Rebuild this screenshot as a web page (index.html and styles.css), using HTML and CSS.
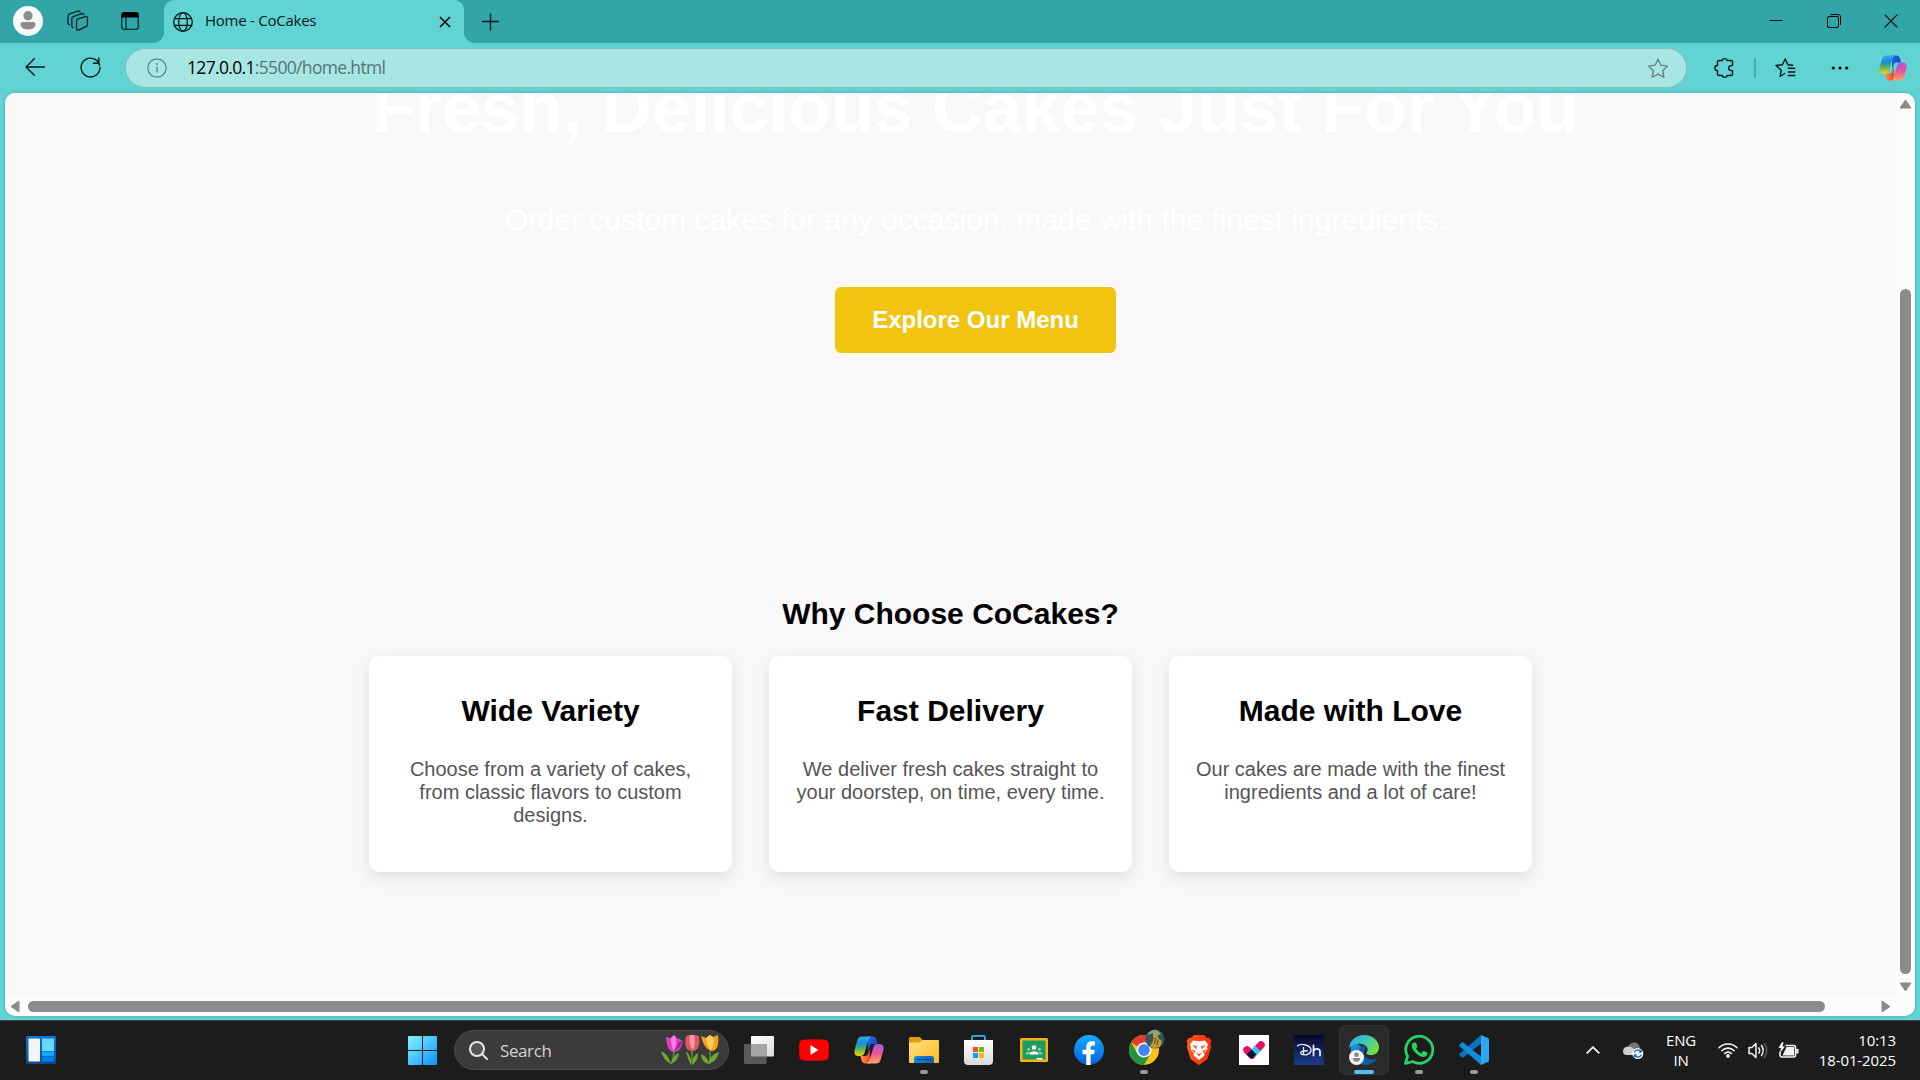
FILE: index.html
```html
<!DOCTYPE html>
<html lang="en">
<head>
<meta charset="utf-8">
<title>Home - CoCakes</title>
<link rel="stylesheet" href="styles.css">
</head>
<body>
<svg class="defs" width="0" height="0">
  <defs>
    <linearGradient id="cpBlue" x1="0" y1="0" x2="0" y2="1"><stop offset="0" stop-color="#27b4f2"/><stop offset=".35" stop-color="#1b8ae0"/><stop offset=".65" stop-color="#57b45a"/><stop offset="1" stop-color="#ffd500"/></linearGradient>
    <linearGradient id="cpDark" x1="0" y1="0" x2="1" y2="1"><stop offset="0" stop-color="#1c6fe0"/><stop offset="1" stop-color="#1637b8"/></linearGradient>
    <linearGradient id="cpPink" x1="0" y1="0" x2="0" y2="1"><stop offset="0" stop-color="#a557e8"/><stop offset=".5" stop-color="#ee5396"/><stop offset="1" stop-color="#ffa95c"/></linearGradient>
    <linearGradient id="cpRed" x1="0" y1="0" x2="1" y2="0"><stop offset="0" stop-color="#ff9a3d"/><stop offset="1" stop-color="#ef4030"/></linearGradient>
    <linearGradient id="win" x1="0" y1="0" x2="1" y2="1"><stop offset="0" stop-color="#85f4ff"/><stop offset="1" stop-color="#0a93ff"/></linearGradient>
    <linearGradient id="folder" x1="0" y1="0" x2="1" y2="1"><stop offset="0" stop-color="#ffe083"/><stop offset="1" stop-color="#fcbc22"/></linearGradient>
    <linearGradient id="tray" x1="0" y1="0" x2="1" y2="0"><stop offset="0" stop-color="#1389dd"/><stop offset="1" stop-color="#0c62b4"/></linearGradient>
    <linearGradient id="bag" x1="0" y1="0" x2="0" y2="1"><stop offset="0" stop-color="#fff"/><stop offset="1" stop-color="#d8d8d8"/></linearGradient>
    <linearGradient id="fb" x1="0" y1="0" x2="0" y2="1"><stop offset="0" stop-color="#18acfe"/><stop offset="1" stop-color="#0163e0"/></linearGradient>
    <linearGradient id="brave" x1="0" y1="0" x2="1" y2="0"><stop offset="0" stop-color="#ff5a1a"/><stop offset="1" stop-color="#ff2a08"/></linearGradient>
    <linearGradient id="dh" x1="0" y1="0" x2="0" y2="1"><stop offset="0" stop-color="#06082a"/><stop offset="1" stop-color="#1d3b8b"/></linearGradient>
    <linearGradient id="edgeTop" x1="0" y1="0" x2="1" y2=".5"><stop offset="0" stop-color="#31a7e0"/><stop offset=".5" stop-color="#36c6c6"/><stop offset="1" stop-color="#6ee04a"/></linearGradient>
    <linearGradient id="edgeBot" x1="0" y1="0" x2="1" y2="1"><stop offset="0" stop-color="#1b9de2"/><stop offset="1" stop-color="#0a4a9a"/></linearGradient>
    <linearGradient id="wid" x1="0" y1="0" x2="0" y2="1"><stop offset="0" stop-color="#0a78d4"/><stop offset="1" stop-color="#0b4a94"/></linearGradient>
    <linearGradient id="view" x1="0" y1="0" x2="1" y2="1"><stop offset="0" stop-color="#fff"/><stop offset="1" stop-color="#dcdcdc"/></linearGradient>
    <symbol id="copilot" viewBox="0 0 30 30">
      <path fill="url(#cpDark)" d="M14 1.500h5c2 0 2.800 1.200 3.400 3.200l1.200 4.300h-4.800c-1.600 0-2.500.8-3 2.400l-1.800 5z"/>
      <path fill="url(#cpRed)" d="M16 28.500h-5c-2 0-2.800-1.200-3.400-3.200L6.400 21h4.800c1.600 0 2.500-.8 3-2.400l1.800-5z"/>
      <path fill="url(#cpBlue)" d="M8.200 1.500h9.600c-2 .3-2.900 1.800-3.500 3.900l-3.700 12.200c-.7 2.300-1.800 3.400-4.200 3.400H4.500C.8 21-.2 18.300.6 15L3.200 5.700C4 2.900 5.500 1.500 8.200 1.500z"/>
      <path fill="url(#cpPink)" d="M21.800 28.500h-9.600c2-.3 2.900-1.800 3.500-3.900l3.700-12.200c.7-2.300 1.800-3.400 4.200-3.400h1.900c3.700 0 4.700 2.700 3.900 6l-2.600 9.300c-.8 2.800-2.300 4.200-5 4.200z"/>
    </symbol>
  </defs>
</svg>

<div class="window">
  <header class="titlebar">
    <div class="titlebar-tools">
      <svg class="avatar" width="30" height="30" viewBox="0 0 30 30"><circle cx="15" cy="15" r="15" fill="#fafafa"/><circle cx="15" cy="9.800" r="4.700" fill="#8c8c8c"/><path d="M9.500 16h11a2 2 0 0 1 2 2c0 3.400-3 5.500-7.500 5.500S7.500 21.400 7.500 18a2 2 0 0 1 2-2z" fill="#8c8c8c"/></svg>
      <svg class="workspaces" width="22" height="22" viewBox="0 0 22 22" fill="none" stroke="#0b2324" stroke-width="1.300" stroke-linejoin="round" stroke-linecap="round"><path d="M10.500 9.200l7.800-2.600c1.200-.4 2.200.2 2.200 1.400v6.800c0 .9-.5 1.600-1.300 1.900l-7.300 3.100c-1.300.5-2.400 0-2.400-1.400v-7c0-1.100.2-1.900 1-2.200z"/><path d="M6 17.500c-.8 0-1.200-.6-1.200-1.500V9.300c0-1.300.4-2.200 1.500-2.600l8.500-3c.9-.3 1.800 0 2.100.7"/><path d="M2.300 14.500c-.9 0-1.300-.6-1.300-1.500V6.300C1 5 1.400 4.200 2.500 3.800l8.500-2.700c.8-.3 1.700 0 2 .7"/></svg>
      <svg class="tabs-icon" width="18" height="18" viewBox="0 0 18 18"><rect x=".7" y=".7" width="16.600" height="16.600" rx="2.600" fill="none" stroke="#062a2b" stroke-width="1.300"/><path d="M.3 5.500V3A2.700 2.700 0 0 1 3 .2h12A2.700 2.700 0 0 1 17.700 3v2.500z" fill="#000"/><path d="M5 5v12.500" stroke="#062a2b" stroke-width="1.200"/></svg>
    </div>
    <div class="tab">
      <svg width="20" height="20" viewBox="0 0 20 20" fill="none" stroke="#06191a" stroke-width="1.300"><circle cx="10" cy="10" r="9.300"/><ellipse cx="10" cy="10" rx="4.300" ry="9.300"/><path d="M1.400 6.700h17.200M1.400 13.300h17.200"/></svg>
      <span class="tab-title">Home - CoCakes</span>
      <svg class="tab-close" width="12" height="12" viewBox="0 0 12 12" stroke="#000" stroke-width="1.500"><path d="M1 1l10 10M11 1L1 11"/></svg>
    </div>
    <svg class="new-tab" width="18" height="18" viewBox="0 0 18 18" stroke="#04191a" stroke-width="1.300"><path d="M8.500.5v17M0 8.500h17"/></svg>
    <div class="window-controls">
      <svg width="14" height="14" viewBox="0 0 14 14" stroke="#000" stroke-width="1"><path d="M.5 6.500h13"/></svg>
      <svg width="14" height="14" viewBox="0 0 14 14" fill="none" stroke="#000" stroke-width="1"><rect x=".5" y="2.500" width="11" height="11" rx="1.500"/><path d="M3.500.5h7.500a2.500 2.500 0 0 1 2.500 2.500v8"/></svg>
      <svg width="14" height="14" viewBox="0 0 14 14" stroke="#000" stroke-width="1.100"><path d="M.7.700l12.600 12.600M13.300.700L.7 13.300"/></svg>
    </div>
  </header>

  <div class="toolbar">
    <svg class="back" width="20" height="18" viewBox="0 0 20 18" fill="none" stroke="#06191a" stroke-width="1.400" stroke-linecap="round" stroke-linejoin="round"><path d="M9.300.8L1 9l8.300 8.200M1 9h18.500"/></svg>
    <svg class="reload" width="21" height="21" viewBox="0 0 21 21" fill="none" stroke="#06191a" stroke-width="1.400" stroke-linecap="round"><path d="M19.600 8.200A9.400 9.400 0 1 0 19.900 10.500M13.500 6.300h5.300V1"/></svg>
    <div class="address">
      <svg width="20" height="20" viewBox="0 0 20 20"><circle cx="10" cy="10" r="9.200" fill="none" stroke="#5b8384" stroke-width="1.200"/><path d="M10 8.800v5.800" stroke="#5b7b7c" stroke-width="1.300"/><circle cx="10" cy="6" r=".95" fill="#5b7b7c"/></svg>
      <span class="url"><b>127.0.0.1</b>:5500/home.html</span>
      <svg class="star" width="22" height="21" viewBox="0 0 22 21" fill="none" stroke="#6a7b7c" stroke-width="1.300" stroke-linejoin="round"><path d="M11 1.200l2.900 6 6.600.9-4.800 4.600 1.200 6.600-5.900-3.200-5.900 3.200 1.200-6.600L1.500 8.100l6.600-.9z"/></svg>
    </div>
    <div class="toolbar-actions">
      <svg width="21" height="22" viewBox="0 0 21 22" fill="none" stroke="#06191a" stroke-width="1.400" stroke-linejoin="round"><path d="M5 3.500h3.200a2.600 2.600 0 0 1 5 0H17a1.500 1.500 0 0 1 1.500 1.500v3.600h-1.300a2.500 2.500 0 0 0 0 5h1.300V17a1.500 1.500 0 0 1-1.500 1.500h-3.800a2.600 2.600 0 0 1-5 0H5A1.500 1.500 0 0 1 3.500 17v-3.300a2.600 2.600 0 0 1 0-5.200V5A1.500 1.500 0 0 1 5 3.500z"/></svg>
      <span class="divider"></span>
      <svg width="21" height="20" viewBox="0 0 21 20" fill="none" stroke="#06191a" stroke-width="1.400" stroke-linejoin="round" stroke-linecap="round"><path d="M9.800 15.500L5 18.500l1.300-6.300L1 7.500l6.400-.8L10.200 1l2.700 5.700 4.600.6M13.300 10.200h6.500M13.300 14h6.500M13.300 17.500h6.500"/></svg>
      <svg class="more" width="18" height="4" viewBox="0 0 18 4"><circle cx="2.300" cy="2" r="1.600"/><circle cx="9" cy="2" r="1.600"/><circle cx="15.700" cy="2" r="1.600"/></svg>
      <svg class="assistant" width="28" height="28"><use href="#copilot"/></svg>
    </div>
  </div>

  <div class="viewport">
    <main class="page">
      <section class="hero">
        <h1>Fresh, Delicious Cakes Just For You</h1>
        <p>Order custom cakes for any occasion, made with the finest ingredients.</p>
        <a class="cta">Explore Our Menu</a>
      </section>
      <section class="features">
        <h2>Why Choose CoCakes?</h2>
        <div class="cards">
          <article class="card"><h3>Wide Variety</h3><p>Choose from a variety of cakes,<br>from classic flavors to custom<br>designs.</p></article>
          <article class="card"><h3>Fast Delivery</h3><p>We deliver fresh cakes straight to<br>your doorstep, on time, every time.</p></article>
          <article class="card"><h3>Made with Love</h3><p>Our cakes are made with the finest<br>ingredients and a lot of care!</p></article>
        </div>
      </section>
    </main>
    <div class="vscroll">
      <svg width="13" height="10" viewBox="0 0 13 10"><path d="M6.500 1L12 9H1z"/></svg>
      <span class="vthumb"></span>
      <svg width="13" height="10" viewBox="0 0 13 10"><path d="M6.500 9L12 1H1z"/></svg>
    </div>
    <div class="hscroll">
      <svg width="10" height="13" viewBox="0 0 10 13"><path d="M1 6.500L9 1v11z"/></svg>
      <span class="hthumb"></span>
      <svg width="10" height="13" viewBox="0 0 10 13"><path d="M9 6.500L1 1v11z"/></svg>
    </div>
  </div>
</div>

<footer class="taskbar">
  <svg class="widgets" width="30" height="28" viewBox="0 0 30 28"><rect width="30" height="28" rx="1.500" fill="url(#wid)"/><rect x="2.500" y="2.500" width="11.500" height="23" rx="1" fill="#f4f4f4"/><path d="M16 2.500h12V15H16z" fill="#67d9ff"/><path d="M16 15.500h12V20H16z" fill="#1ba5f8"/><path d="M16 20.500h12v5H16z" fill="#0482ea"/></svg>
  <svg class="start" width="29" height="29" viewBox="0 0 29 29"><path fill="url(#win)" d="M1 0h13v14H0V1a1 1 0 0 1 1-1zM15 0h13a1 1 0 0 1 1 1v13H15zM0 15h14v14H1a1 1 0 0 1-1-1zM15 15h14v13a1 1 0 0 1-1 1H15z"/></svg>
  <div class="search">
    <svg width="19" height="19" viewBox="0 0 19 19" fill="#555" stroke="#e4e8ea" stroke-width="2"><circle cx="8" cy="8" r="7"/><path d="M13 13l5 5" stroke-linecap="round"/></svg>
    <span>Search</span>
    <svg class="tulips" width="60" height="32" viewBox="0 0 60 32">
      <g stroke="#4f8f28" stroke-width="1.600" fill="none"><path d="M14 17q0 7-3 13M32 17v13M50 17q1 7-1 13"/></g>
      <g fill="#6ea833"><path d="M11 30Q8 20 1 17q2 9 10 13zM11 30q1-8 8-11-1 8-8 11zM31 31q-4-8-5-14 6 6 5 14zM32 31q0-9 6-12 0 8-6 12zM49 30q-8-2-8-10 7 3 8 10zM49 30q0-9 10-12-2 9-10 12z"/></g>
      <path d="M6 3l5 1 3-3 3 3 6 3q-2 11-9 11T6 3z" fill="#d945b9"/><path d="M11 4q0 9 3 13 3-6 2-13l-2-3z" fill="#f47fdb"/><path d="M14 17q6-3 9-10l-4 1z" fill="#a91d91"/>
      <path d="M26 2l4-1h5l4 1q2 15-7 15T26 2z" fill="#dc5965"/><path d="M30 1h4q2 9-1 15-5-6-3-15z" fill="#fb9ca0"/>
      <path d="M41 2l5 2 4-3 3 2 5-2q2 16-7 16-7-2-10-15z" fill="#f0a322"/><path d="M46 4l4-3 3 2q2 8-2 13-4-5-5-12z" fill="#ffd15b"/>
    </svg>
  </div>
  <nav class="apps">
    <span class="app"><svg width="30" height="28" viewBox="0 0 30 28"><rect x="7" width="23" height="20.500" rx="1" fill="url(#view)"/><path d="M1 8h21.500v19a1 1 0 0 1-1 1H1a1 1 0 0 1-1-1V9a1 1 0 0 1 1-1z" fill="#595959"/><path d="M7 8h15.500v12.500H7z" fill="#a5a5a5"/></svg></span>
    <span class="app"><svg width="30" height="22" viewBox="0 0 30 22"><path d="M4 .7Q15-.4 26 .7q3 .3 3.500 3.300.9 7 0 14-.5 3-3.500 3.300-11 1.100-22 0Q1 21 .5 18q-.9-7 0-14Q1 1 4 .7z" fill="#f00"/><path d="M11.500 6v10l8-5z" fill="#fff"/></svg></span>
    <span class="app"><svg width="30" height="30"><use href="#copilot"/></svg></span>
    <span class="app running"><svg width="30" height="28" viewBox="0 0 30 28"><path d="M1.500 1h8.300c1 0 1.400.3 2 1l2 2.500H29V14H0V2.500A1.500 1.500 0 0 1 1.500 1z" fill="#e0a008"/><path d="M0 6.500h9.500c1 0 1.600-.3 2.200-.9l1.600-1.600H29a1 1 0 0 1 1 1v21a1 1 0 0 1-1 1H1a1 1 0 0 1-1-1z" fill="url(#folder)"/><path d="M5 27v-4.500A2.500 2.500 0 0 1 7.500 20h15a2.500 2.500 0 0 1 2.500 2.500V27z" fill="url(#tray)"/><path d="M8 23.500h14" stroke="#0a4685" stroke-width="1.200"/></svg></span>
    <span class="app"><svg width="29" height="30" viewBox="0 0 29 30"><path d="M8 6V2.300A1.500 1.500 0 0 1 9.500.9h10A1.500 1.500 0 0 1 21 2.300V6" fill="none" stroke="#2eb5ec" stroke-width="1.800"/><path d="M0 5h29v21a4 4 0 0 1-4 4H4a4 4 0 0 1-4-4z" fill="url(#bag)"/><path d="M9 12h5v5H9z" fill="#f25022"/><path d="M15 12h5v5h-5z" fill="#7fba00"/><path d="M9 18h5v5H9z" fill="#00a4ef"/><path d="M15 18h5v5h-5z" fill="#ffb900"/></svg></span>
    <span class="app"><svg width="28" height="24" viewBox="0 0 28 24"><rect width="28" height="24" rx="1.500" fill="#f4b412"/><path d="M2.500 2.500h23v19h-23z" fill="#1c9d5f"/><g fill="#fff"><circle cx="14" cy="9.500" r="2.300"/><path d="M9.300 16.500c0-4.400 9.400-4.400 9.400 0zM16.500 20h6v1.500h-6z"/></g><g fill="#8bd0a9"><circle cx="8.700" cy="11.300" r="1.500"/><circle cx="19.300" cy="11.300" r="1.500"/><path d="M5.500 16.500c0-2.500 2-3.200 3.800-2.600l-1 2.600zM22.500 16.500c0-2.500-2-3.200-3.800-2.600l1 2.600z"/></g></svg></span>
    <span class="app"><svg width="30" height="30" viewBox="0 0 30 30"><circle cx="15" cy="15" r="15" fill="url(#fb)"/><path d="M12.300 30V19.200H8.500v-4.400h3.800v-2.500c0-4 2-6 5.800-6 1.200 0 2 .1 2.800.3v4h-2c-1.800 0-2.300.8-2.300 2.300v1.900h4.200l-.8 4.400h-3.400V30z" fill="#fff"/></svg></span>
    <span class="app running"><svg class="chrome" width="36" height="36" viewBox="0 -6 36 36"><circle cx="15" cy="15" r="15" fill="#fbc116"/><path d="M15 15L2 7.500A15 15 0 0 1 28 7.500H15z" fill="#e33b2e"/><path d="M2 7.500A15 15 0 0 0 15 30l6.500-11.300L8.500 18.700z" fill="#229342"/><circle cx="15" cy="15" r="7.500" fill="#fff"/><circle cx="15" cy="15" r="5.900" fill="#4285f4"/><circle cx="26" cy="4" r="9.500" fill="#315661"/><path d="M18 0q4-6 10-5l4 4-4 2-3-3z" fill="#78a795"/><path d="M24-3l4 1 1 5 4 3-2 6-7 1-3-2 3-5z" fill="#c29a35"/><path d="M24 3l3 1-2 5M29 5l-1 5" stroke="#5e4a1b" fill="none"/></svg></span>
    <span class="app"><svg width="26" height="30" viewBox="0 0 26 30"><path d="M8 0h10l3 3 2-.3L25.500 6l-1 3 .7 3-3.700 12L13 30l-8.500-6L.8 12l.7-3-1-3L3 2.700 5 3z" fill="url(#brave)"/><path d="M7 5.500l6 .8 6-.8 3 4-1 3 .5 1.500-3.500 4.500.5 2L13 25l-5.500-4.500.5-2L4.500 14l.5-1.500-1-3z" fill="#fff"/><path d="M6.500 10l4.300 1.300-.5 3.200zM19.500 10l-4.300 1.300.5 3.200zM10 17.500l3 1.500 3-1.500-3 4zM5.500 14l4 2-1 2zM20.500 14l-4 2 1 2z" fill="#ff431a"/></svg></span>
    <span class="app"><svg width="30" height="30" viewBox="0 0 30 30"><path d="M0 0h30v30H0z" fill="#fff"/><path d="M8 15l5 5" stroke="#ea0f62" stroke-width="7.500" stroke-linecap="round"/><path d="M22 10l-9 9.500" stroke="#ea0f62" stroke-width="7.500" stroke-linecap="round"/><path d="M19 13.500l-6 6" stroke="#3cc8f4" stroke-width="7.500"/><path d="M12.500 14.500l5 5-5 4.500-5-4.500z" fill="#10152f"/></svg></span>
    <span class="app"><svg width="30" height="30" viewBox="0 0 30 30" fill="none" stroke="#e9ecf7" stroke-width="1.300" stroke-linecap="round"><path d="M0 0h30v30H0z" fill="url(#dh)" stroke="none"/><path d="M3.500 10.800C7 8 17 10 17 15.200c0 4-6 5.800-9.500 4-2.500-2 1-3.900 6-3.300M9.500 12.500v7"/><path d="M19.500 10.500v10M19.500 16.300c.5-3 6.500-3.500 6.500.3v3.900" stroke-width="1.800"/></svg></span>
    <span class="app active"><svg width="30" height="30" viewBox="0 0 30 30"><path d="M2 9C0 19 5 29 16 30c5 0 9-2 12-6-6 2-13 0-13-6 0-4-6-12-13-9z" fill="url(#edgeBot)"/><path d="M15 18c0 6 7 8.500 13.500 5.500-7 7-17 3.500-18.500-4.500-.8-4 1-6.500 5-8.500 3 2 0 3.500 0 7.500z" fill="#1259a6"/><path d="M0 13C1 5 7 0 15 0c9 0 15 6 15 12.500 0 5-4 7.500-8 7.500-4.500 0-5.300-1.500-4-3 2-3-.5-7-5-8-5-1-10 0-13 4z" fill="url(#edgeTop)"/><circle cx="7.500" cy="22.500" r="7.500" fill="#f5f5f5"/><circle cx="7.500" cy="19.700" r="2.300" fill="#858585"/><path d="M3.800 23h7.400q0 3.800-3.700 3.800T3.800 23z" fill="#858585"/></svg></span>
    <span class="app running"><svg width="30" height="30" viewBox="0 0 30 30"><path d="M1.500 28.500l2-7.200A13.500 13.500 0 1 1 8.700 26.500z" fill="none" stroke="#25d366" stroke-width="2.800" stroke-linejoin="round"/><path d="M9.700 7.500h1.500c.5 0 .8.300 1 .8l1.200 2.900c.2.600-.9 1.700-1.300 2.200 1.300 2.400 3 3.800 5.300 4.800l1.700-2c.3-.3.600-.3 1-.2l2.700 1.300c.5.200.8.500.7 1-.3 2.500-2 3.700-4 3.700-4.600-.1-11-5.800-11.800-10.500-.2-1.500.5-3 2-4z" fill="#25d366"/></svg></span>
    <span class="app running"><svg width="30" height="30" viewBox="0 0 30 30"><path d="M22 0v8.500L4.500 22.300c-.6.500-1.200.5-1.800 0L.6 20.500c-.6-.6-.6-1.300 0-1.800z" fill="#0b72bd"/><path d="M22 30v-8.500L4.500 7.700c-.6-.5-1.200-.5-1.800 0L.6 9.500c-.6.600-.6 1.300 0 1.800z" fill="#128bd8"/><path d="M22 0l6.700 3c.8.400 1.300 1 1.300 2v20c0 1-.5 1.600-1.300 2L22 30z" fill="#2aa9f2"/></svg></span>
  </nav>
  <div class="tray">
    <svg width="14" height="8" viewBox="0 0 14 8" fill="none" stroke="#f4f4f4" stroke-width="1.800"><path d="M.7 7.300L7 1.200l6.300 6.100"/></svg>
    <svg class="cloud" width="21" height="17" viewBox="0 0 21 17"><path d="M5 5q2-5 7-4.500 4 .5 5 5.500l-6 6z" fill="#777"/><path d="M0 9.500Q0 5 5 4.500q4 0 6 2.500l4 2-4 4H3Q0 12.500 0 9.500z" fill="#cfcfcf"/><circle cx="14.800" cy="11.500" r="5.500" fill="#fff"/><path d="M11.300 10.500a3.600 3.600 0 0 1 6.500-.8M18.300 12.500a3.600 3.600 0 0 1-6.500.8M18.200 7.500v2.600h-2.500M11.400 15.500v-2.600h2.500" fill="none" stroke="#1674c6" stroke-width="1.400"/></svg>
    <span class="lang">ENG<br>IN</span>
    <svg class="wifi" width="20" height="16" viewBox="0 0 20 16" fill="none" stroke="#f4f4f4" stroke-width="1.600" stroke-linecap="round"><path d="M1 5.700a12.800 12.800 0 0 1 18 0M3.800 8.700a8.800 8.800 0 0 1 12.400 0M6.600 11.500a4.800 4.800 0 0 1 6.800 0"/><circle cx="10" cy="13.900" r="1.100" fill="#f4f4f4"/></svg>
    <svg class="sound" width="20" height="17" viewBox="0 0 20 17" fill="none" stroke="#f4f4f4" stroke-width="1.500" stroke-linecap="round" stroke-linejoin="round"><path d="M1 5.500h2.800L8 1.500v14l-4.200-4H1z"/><path d="M10.800 5.800q1.700 2.700 0 5.400M13.500 3.500q3.300 5 0 10"/><path d="M16.300 1.500q5 7 0 14" stroke="#5a5a5a"/></svg>
    <svg class="battery" width="21" height="17" viewBox="0 0 21 17"><path d="M7.500 3.500h8a2 2 0 0 1 2 2v7.500a2 2 0 0 1-2 2H4a2 2 0 0 1-2-2V9.500" fill="none" stroke="#f4f4f4" stroke-width="1.600"/><path d="M8.500 5h7.500v8.500H4.500z" fill="#f4f4f4"/><path d="M18.200 7H20.500v4.500h-2.300z" fill="#f4f4f4"/><path d="M4 0L.5 6H3l-1 5 5-6.500H4.500L5.500.500z" fill="#f4f4f4"/></svg>
    <span class="clock">10:13<br>18-01-2025</span>
  </div>
</footer>
</body>
</html>
```
FILE: styles.css
```css
* { box-sizing: border-box; }

body {
  margin: 0;
  width: 1920px;
  height: 1080px;
  overflow: hidden;
  display: flex;
  flex-direction: column;
  background: #62d3d3;
  font-family: "Open Sans", "Noto Sans", sans-serif;
}

svg { display: block; flex: none; }
.defs { position: absolute; }

.window { height: 1020px; display: flex; flex-direction: column; }

/* title bar */
.titlebar {
  height: 43px;
  flex: none;
  display: flex;
  align-items: center;
  background: #31a5a8;
}
.titlebar-tools {
  width: 164px;
  height: 43px;
  display: flex;
  align-items: center;
  padding: 0 0 1px 13px;
}
.workspaces { margin-left: 24px; }
.tabs-icon { margin-left: 32px; }
.tab {
  position: relative;
  width: 300px;
  height: 43px;
  display: flex;
  align-items: center;
  padding: 0 13px 0 9px;
  background: #62d3d3;
  border-radius: 10px 10px 0 0;
}
.tab::before,
.tab::after {
  content: "";
  position: absolute;
  bottom: 0;
  width: 10px;
  height: 10px;
}
.tab::before { left: -10px; background: radial-gradient(circle at 0 0, transparent 9.5px, #62d3d3 10px); }
.tab::after { right: -10px; background: radial-gradient(circle at 100% 0, transparent 9.5px, #62d3d3 10px); }
.tab-title {
  margin-left: 12px;
  padding-bottom: 3px;
  font-size: 15px;
  line-height: 20px;
  letter-spacing: -0.25px;
  white-space: nowrap;
  color: #06191a;
}
.tab-close { margin-left: auto; }
.new-tab { margin-left: 18px; }
.window-controls {
  margin-left: auto;
  display: flex;
  gap: 43.500px;
  padding: 0 22px 1px 0;
}

/* toolbar */
.toolbar {
  height: 50px;
  flex: none;
  display: flex;
  align-items: center;
  padding-left: 25px;
}
.back { margin-bottom: 2px; }
.reload { margin: 0 0 1px 35px; }
.address {
  width: 1562px;
  height: 40px;
  margin-left: 24px;
  display: flex;
  align-items: center;
  padding: 0 17px 0 21px;
  background: #a8e6e4;
  border: 1px solid #8bbcbc;
  border-radius: 20px;
}
.url {
  margin-left: 20px;
  padding-bottom: 2px;
  font-size: 17.500px;
  line-height: 24px;
  letter-spacing: -0.67px;
  color: #557576;
}
.url b { font-weight: 400; color: #000; }
.star { margin-left: auto; }
.toolbar-actions { flex: 1; display: flex; align-items: center; padding-left: 27px; }
.divider { width: 2px; height: 20px; margin: 0 19px; background: #4ea9aa; }
.more { margin-left: 35px; }
.assistant { margin-left: 30px; }

/* web page area */
.viewport {
  margin-left: 5px;
  width: 1910px;
  height: 923px;
  flex: none;
  display: grid;
  grid-template-columns: 1891px 19px;
  grid-template-rows: 904px 19px;
  overflow: hidden;
  border-radius: 10px;
  background: #fcfcfc;
  box-shadow: 0 0 3px rgba(0, 60, 60, 0.35);
}
.page {
  overflow: hidden;
  background: #f8f8f8;
  font-family: "Liberation Sans", Arial, sans-serif;
  text-align: center;
}
.hero {
  width: 1941px;
  height: 504px;
  margin-top: -25px;
  color: #fff;
}
.hero h1 { margin: 0; font-size: 70px; line-height: 80px; }
.hero p { margin: 55px 0 0; font-size: 30px; line-height: 34px; }
.cta {
  display: block;
  width: 281px;
  margin: 50px auto 0;
  padding: 19px 0 20px;
  border-radius: 6px;
  background: #f1c40f;
  color: #fff;
  font-size: 24px;
  font-weight: 700;
  line-height: 27px;
}
.features h2 { margin: 25px 0 25px; font-size: 30px; line-height: 34px; color: #000; }
.cards { display: flex; justify-content: center; gap: 37px; }
.card {
  width: 363px;
  height: 216px;
  padding-top: 38px;
  border-radius: 10px;
  background: #fff;
  box-shadow: 0 5px 15px rgba(0, 0, 0, 0.1);
}
.card h3 { margin: 0; font-size: 30px; line-height: 34px; color: #000; }
.card p { margin: 30px 0 0; font-size: 20px; line-height: 23px; color: #555; }

/* scroll bars */
.vscroll,
.hscroll { display: flex; align-items: center; }
.vscroll svg,
.hscroll svg { fill: #8b8b8b; stroke: #8b8b8b; stroke-linejoin: round; }
.vscroll { flex-direction: column; padding-top: 6px; }
.vthumb { width: 11px; height: 685px; margin: 180px 0 8px; border-radius: 6px; background: #8b8b8b; }
.hscroll { padding-left: 5px; }
.hthumb { width: 1797px; height: 11px; margin: 0 56px 0 8px; border-radius: 6px; background: #8b8b8b; }

/* task bar */
.taskbar {
  height: 60px;
  display: flex;
  align-items: center;
  padding-left: 26px;
  background: #1c1c1c;
  box-shadow: inset 0 1px #404544;
  color: #fff;
}
.start { margin-left: 352px; }
.search {
  width: 275px;
  height: 40px;
  margin-left: 17px;
  display: flex;
  align-items: center;
  padding: 0 8px 0 14px;
  border: 1px solid #4b4b4b;
  border-radius: 20px;
  background: #3b3b3b;
}
.search span { margin-left: 12px; font-size: 17px; letter-spacing: -0.4px; color: #d2d2d2; }
.tulips { margin-left: auto; }
.apps { display: flex; margin-left: 2px; }
.app {
  position: relative;
  width: 55px;
  height: 50px;
  display: flex;
  align-items: center;
  justify-content: center;
}
.app.active::before {
  content: "";
  position: absolute;
  inset: 0 2.500px;
  border: 1px solid #343434;
  border-radius: 6px;
  background: #2a2a2a;
}
.app svg { position: relative; }
.app .chrome { top: -3px; left: 3px; }
.app.running::after,
.app.active::after {
  content: "";
  position: absolute;
  bottom: 1px;
  width: 8px;
  height: 4px;
  border-radius: 2px;
  background: #9a9a9a;
}
.app.active::after { width: 20px; background: #4cc2ff; }
.tray {
  margin-left: auto;
  display: flex;
  align-items: center;
  padding-right: 24px;
  font-size: 15px;
  line-height: 20px;
}
.cloud { margin-left: 23px; }
.lang { width: 40px; margin-left: 17px; text-align: center; letter-spacing: -0.2px; }
.wifi { margin-left: 17px; }
.sound { margin-left: 10px; }
.battery { margin-left: 10px; }
.clock { width: 90px; margin-left: 7px; text-align: right; letter-spacing: -0.1px; }
```
